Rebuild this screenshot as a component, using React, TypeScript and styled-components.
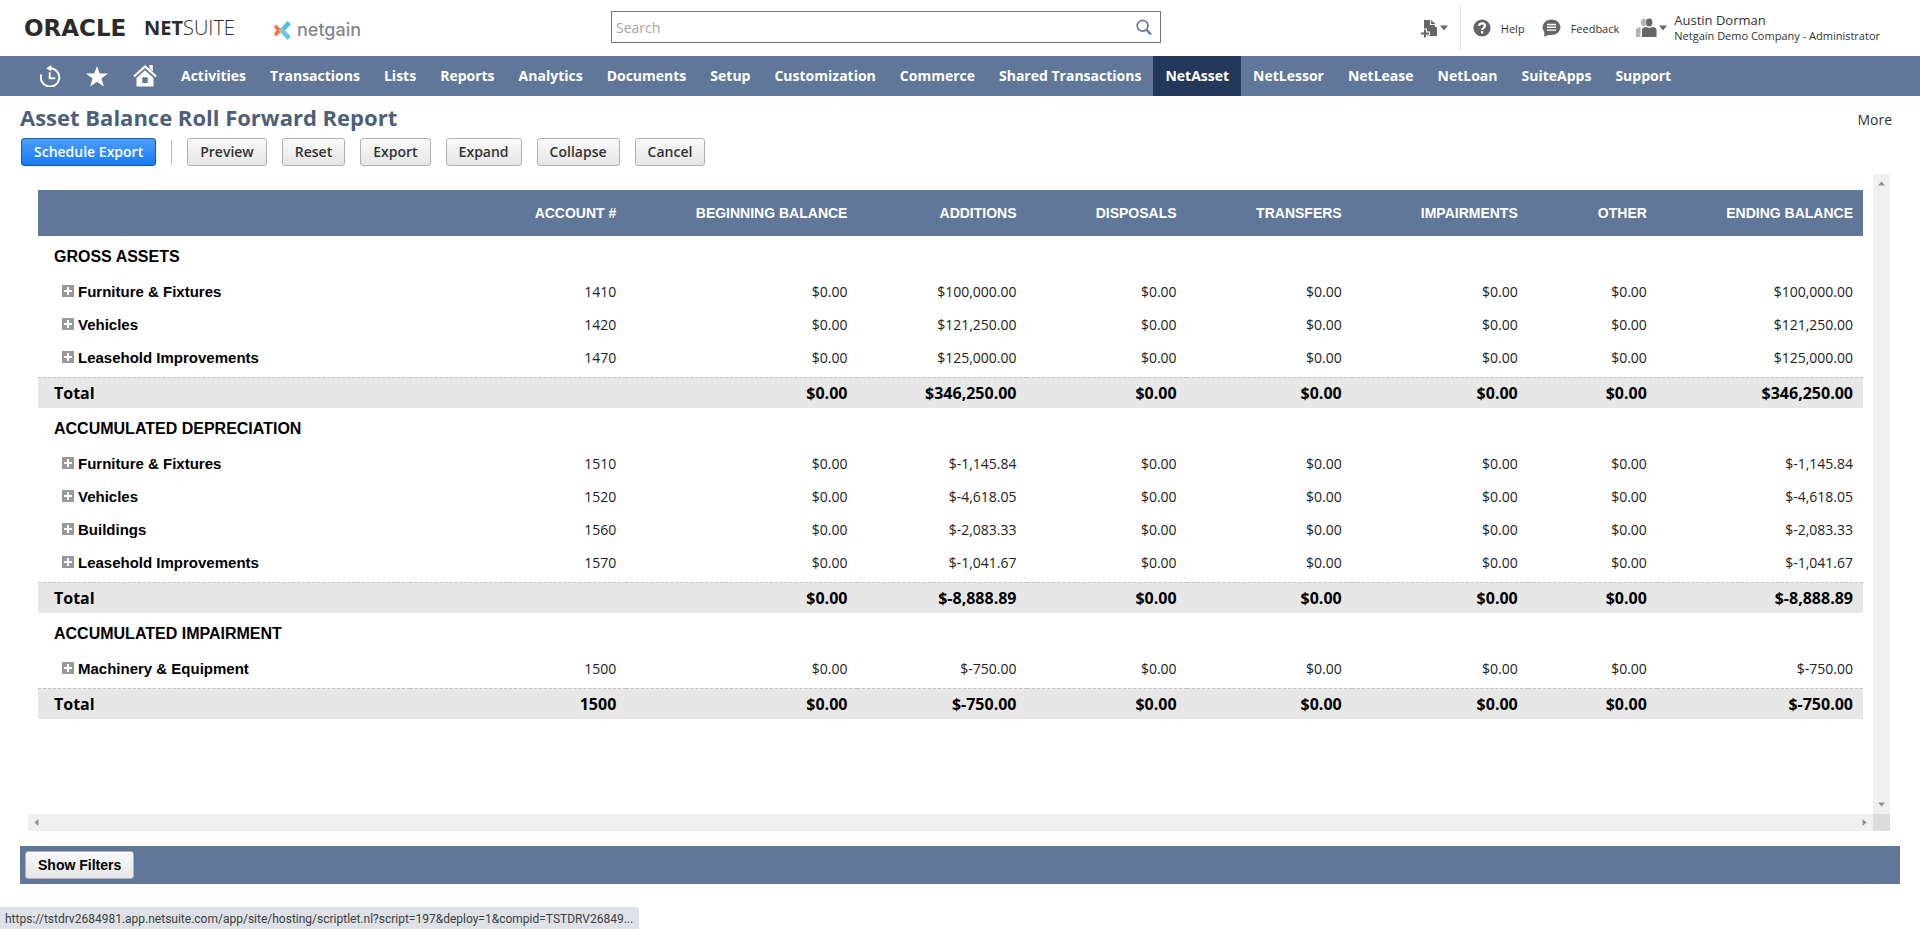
import React from "react";
import styled, { createGlobalStyle, css } from "styled-components";

const ui = `"Open Sans", "Noto Sans", sans-serif`;
const arial = `"Liberation Sans", Arial, sans-serif`;
const slate = "#607799";

const GlobalStyle = createGlobalStyle`
  *, *::before, *::after { box-sizing: border-box; }
  body { margin: 0; background: #fff; font-family: ${ui}; font-size: 14px; color: #333; }
  button, input { font: inherit; }
  a { color: inherit; text-decoration: none; }
`;

const Page = styled.div`
  display: flex;
  flex-direction: column;
`;

/* ---------- top header ---------- */
const Header = styled.header`
  display: grid;
  grid-template-columns: 611fr 550fr 759fr;
  align-items: center;
  height: 56px;
`;

const Brands = styled.div`
  display: flex;
  align-items: center;
  padding-left: 24px;
`;

const OracleLogo = styled.a`
  display: flex;
  align-items: center;
  width: 249px;
  height: 28px;
  color: #2d2a28;
  font-size: 20px;
  line-height: 28px;
`;

const Oracle = styled.span`
  width: 120px;
  font-family: "DejaVu Sans", sans-serif;
  font-size: 23px;
  font-weight: 700;
`;

const Net = styled.span`
  font-weight: 700;
`;

const Suite = styled.span`
  font-weight: 300;
`;

const NetgainLogo = styled.a`
  display: flex;
  align-items: center;
  gap: 5px;
  padding-top: 4px;
  color: #85878b;
  font-family: Inter, sans-serif;
  font-size: 18px;
  font-weight: 500;
  line-height: 22px;
`;

const SearchForm = styled.form`
  display: flex;
  align-items: center;
  height: 32px;
  margin-top: -2px;
  border: 1px solid #757575;
`;

const SearchInput = styled.input`
  flex: 1;
  min-width: 0;
  height: 30px;
  padding: 0 4px;
  border: 0;
  outline: 0;
  background: none;
  &::placeholder { color: #a6a6a6; opacity: 1; }
`;

const IconButton = styled.button`
  display: flex;
  align-items: center;
  gap: 2px;
  padding: 0;
  border: 0;
  background: none;
  color: #666;
`;

const SearchButton = styled(IconButton)`
  padding: 0 8px;
  color: ${slate};
`;

const Tools = styled.div`
  display: flex;
  align-items: center;
  justify-content: flex-end;
  padding-right: 40px;
  font-size: 11px;
`;

const ToolDivider = styled.span`
  width: 1px;
  height: 46px;
  margin: 0 12px;
  background: #e0e0e0;
`;

const ToolLink = styled.a`
  display: flex;
  align-items: center;
  gap: 10px;
  margin-right: 17px;
  svg { color: #666; }
`;

const User = styled.div`
  display: flex;
  flex-direction: column;
  margin-left: 7px;
  font-size: 11px;
  line-height: 16px;
  white-space: nowrap;
`;

const UserName = styled.span`
  font-size: 13px;
`;

/* ---------- navigation ---------- */
const Nav = styled.nav`
  display: flex;
  height: 40px;
  padding-left: 27px;
  background: ${slate};
  color: #fff;
`;

const NavLink = styled.a<{ $active?: boolean }>`
  display: flex;
  align-items: center;
  padding: 0 12px 2px;
  font-weight: 700;
  white-space: nowrap;
  ${(p) => p.$active && css`background: #24385b;`}
`;

const NavIcon = styled.a`
  display: flex;
  align-items: center;
  padding: 0 12px 0 13px;
`;

/* ---------- page title and actions ---------- */
const TitleRow = styled.div`
  display: flex;
  justify-content: space-between;
  align-items: flex-end;
  padding: 6px 28px 0 20px;
  line-height: 24px;
`;

const Title = styled.h1`
  margin: 0;
  color: #4d5f79;
  font-size: 22px;
  font-weight: 700;
  line-height: 30px;
`;

const Actions = styled.div`
  display: flex;
  align-items: center;
  gap: 15px;
  margin: 6px 0 8px 21px;
`;

const Button = styled.button<{ $primary?: boolean }>`
  height: 28px;
  padding: 0 12px;
  border: 1px solid #b2b2b2;
  border-radius: 3px;
  background: linear-gradient(#fafafa, #e5e5e5);
  color: #333;
  font-weight: 600;
  line-height: 26px;
  white-space: nowrap;
  ${(p) =>
    p.$primary &&
    css`
      border-color: #125ab2;
      background: linear-gradient(#4c9dff, #187bf2);
      color: #fff;
    `}
`;

const ActionDivider = styled.span`
  width: 1px;
  height: 25px;
  background: #bbb;
`;

/* ---------- report panel ---------- */
const Panel = styled.section`
  display: grid;
  grid-template-columns: 1fr 17px;
  grid-template-rows: auto 17px;
  margin: 0 30px 0 28px;
`;

const Sheet = styled.div`
  padding: 16px 10px 95px 10px;
`;

const Track = styled.div<{ $vertical?: boolean }>`
  display: flex;
  flex-direction: ${(p) => (p.$vertical ? "column" : "row")};
  align-items: center;
  justify-content: space-between;
  padding: ${(p) => (p.$vertical ? "6px 0" : "0 5px")};
  background: #f0f0f0;
`;

const Corner = styled.div`
  background: #dcdcdc;
`;

const Table = styled.table`
  width: 100%;
  border-collapse: separate;
  border-spacing: 0;
  table-layout: fixed;
  color: #000;
`;

const Th = styled.th`
  height: 46px;
  padding: 0 10px 0 0;
  background: ${slate};
  color: #fff;
  font-family: ${arial};
  font-size: 14px;
  font-weight: 700;
  text-align: right;
`;

const SectionCell = styled.th`
  height: 42px;
  padding: 0 0 0 16px;
  font-family: ${arial};
  font-size: 16px;
  font-weight: 700;
  text-align: left;
`;

const LabelCell = styled.th`
  height: 33px;
  padding: 0 0 6px 24px;
  font-family: ${arial};
  font-size: 15px;
  font-weight: 700;
  text-align: left;
`;

const Label = styled.span`
  display: flex;
  align-items: center;
  gap: 4px;
`;

const Toggle = styled.button`
  display: block;
  width: 12px;
  height: 12px;
  margin-bottom: 2px;
  padding: 0;
  border: 0;
  background: #999;
  svg { display: block; }
`;

const Td = styled.td`
  padding: 0 10px 5px 0;
  color: #222;
  font-size: 14px;
  line-height: 20px;
  text-align: right;
`;

const totalStyle = css`
  height: 31px;
  border-top: 1px dashed #c4c4c4;
  background: #e7e7e7;
  color: #000;
  font-size: 16px;
  font-weight: 700;
  line-height: 22px;
`;

const TotalLabel = styled.th`
  ${totalStyle}
  padding: 0 0 0 16px;
  text-align: left;
`;

const TotalCell = styled.td`
  ${totalStyle}
  padding: 0 10px 0 0;
  text-align: right;
`;

/* ---------- footer ---------- */
const FilterBar = styled.div`
  display: flex;
  align-items: center;
  height: 38px;
  margin: 15px 20px 45px;
  padding-left: 5px;
  background: ${slate};
`;

const FilterButton = styled(Button)`
  color: #000;
  font-family: ${arial};
  font-weight: 700;
`;

const StatusUrl = styled.div`
  position: fixed;
  left: 0;
  bottom: 0;
  height: 22px;
  padding: 0 6px 0 5px;
  border-radius: 0 4px 0 0;
  background: #dee1e6;
  color: #3c4043;
  font-family: Roboto, sans-serif;
  font-size: 12px;
  line-height: 24px;
  white-space: nowrap;
`;

/* ---------- icons ---------- */
const Caret = () => (
  <svg width="8" height="6" viewBox="0 0 8 6" fill="currentColor"><path d="M0 .5h8L4 5.500z" /></svg>
);

const ScrollArrow = ({ turn }: { turn: number }) => (
  <svg width="7" height="7" viewBox="0 0 7 7" fill="#8f8f8f">
    <path d="M3.500 1.500 7 5.500H0z" transform={`rotate(${turn} 3.5 3.5)`} />
  </svg>
);

const NetgainMark = () => (
  <svg width="19" height="21" viewBox="0 0 19 21">
    <path d="M1 7 3 4.500 9 10.500 3 16.500 1 14 3.500 10.500z" fill="#f4743b" />
    <path d="M14.500 1 18 4.200 12.200 10.400 8.700 13.600 5.600 10.400z" fill="#4cc3e6" />
    <path d="M5.600 10.400 9 7.200 18 16.800 14.500 20z" fill="#62cbe9" />
    <path d="m9 7.200 3.200 3.200L9 13.600l-3.400-3.200z" fill="#a9b9bd" />
  </svg>
);

const SearchIcon = () => (
  <svg width="16" height="17" viewBox="0 0 16 17" fill="none" stroke="currentColor">
    <circle cx="6.600" cy="6.800" r="5.400" strokeWidth="1.700" />
    <path d="m10.600 10.900 4.400 4.600" strokeWidth="2.200" />
  </svg>
);

const CreateIcon = () => (
  <svg width="17" height="19" viewBox="0 0 17 19" fill="currentColor">
    <path d="M3 1h6v5h5v2h2v9H6v-6H3z" />
    <path d="m10 1 4.500 4H10z" />
    <path d="M4 9.500V19M0 14.500h9" stroke="#fff" strokeWidth="4" />
    <path d="M4 10.500v8M0 14.500h8" stroke="currentColor" strokeWidth="2" />
  </svg>
);

const HelpIcon = () => (
  <svg width="18" height="18" viewBox="0 0 18 18">
    <circle cx="9" cy="9" r="8.600" fill="currentColor" />
    <path d="M6.200 7c0-3.700 5.800-3.400 5.800-.2C12 8.800 9.100 8.800 9.100 11" fill="none" stroke="#fff" strokeWidth="2.200" />
    <rect x="8" y="12.200" width="2.300" height="2.200" fill="#fff" />
  </svg>
);

const FeedbackIcon = () => (
  <svg width="19" height="18" viewBox="0 0 19 18">
    <ellipse cx="9.500" cy="8.300" rx="9" ry="7.800" fill="currentColor" />
    <path d="M2.300 12v5.800l6-2.500z" fill="currentColor" />
    <path d="M5 5.500h9M5 8.300h9M5 11.100h9" stroke="#fff" strokeWidth="1.400" />
  </svg>
);

const PeopleIcon = () => (
  <svg width="21" height="20" viewBox="0 0 21 20">
    <ellipse cx="8" cy="4.500" rx="3.200" ry="3.800" fill="#b5b5b5" />
    <path d="M0 19v-7.500Q.5 9 4.500 9V19z" fill="#b5b5b5" />
    <ellipse cx="13.200" cy="4.500" rx="3.500" ry="4.200" fill="currentColor" stroke="#fff" strokeWidth=".6" />
    <path d="M6 19v-7q0-2.500 3.500-3l3.700 1 3.700-1q3.600.5 3.600 3v7z" fill="currentColor" />
  </svg>
);

const HistoryIcon = () => (
  <svg width="21" height="22" viewBox="0 0 21 22" fill="none" stroke="currentColor">
    <path d="M1.300 9.500A9.200 9.200 0 1 0 10.500 3.200" strokeWidth="2" />
    <path d="M11.300 0v6.400L6.300 3.200z" fill="currentColor" stroke="none" />
    <path d="M9.700 7.300v6h5.500" strokeWidth="2" />
  </svg>
);

const StarIcon = () => (
  <svg width="22" height="21" viewBox="0 0 22 21" fill="currentColor">
    <path d="m11 0 2.700 7.600H22l-6.600 4.900 2.500 8.100L11 15.700l-6.900 4.900 2.500-8.100L0 7.600h8.300z" />
  </svg>
);

const HomeIcon = () => (
  <svg width="24" height="22" viewBox="0 0 24 22">
    <path d="m1 11.500 11-10 11 10" fill="none" stroke="currentColor" strokeWidth="2.200" />
    <path d="M16.500 0h3.300v6.500l-3.300-3z" fill="currentColor" />
    <path d="M12 5.300 20.500 13v8.500h-17V13z" fill="currentColor" />
    <rect x="9.300" y="12.300" width="5.400" height="5.700" fill={slate} />
  </svg>
);

/* ---------- data ---------- */
const menu = [
  "Activities", "Transactions", "Lists", "Reports", "Analytics", "Documents", "Setup",
  "Customization", "Commerce", "Shared Transactions", "NetAsset", "NetLessor", "NetLease",
  "NetLoan", "SuiteApps", "Support",
];

const actions = ["Preview", "Reset", "Export", "Expand", "Collapse", "Cancel"];

const columnWidths = [372, 216, 231, 169, 160, 165, 176, 129, 206];
const columns = [
  "ACCOUNT #", "BEGINNING BALANCE", "ADDITIONS", "DISPOSALS", "TRANSFERS", "IMPAIRMENTS",
  "OTHER", "ENDING BALANCE",
];

interface Section {
  name: string;
  rows: [label: string, account: string, amount: string][];
  total: [account: string, amount: string];
}

const sections: Section[] = [
  {
    name: "GROSS ASSETS",
    rows: [
      ["Furniture & Fixtures", "1410", "$100,000.00"],
      ["Vehicles", "1420", "$121,250.00"],
      ["Leasehold Improvements", "1470", "$125,000.00"],
    ],
    total: ["", "$346,250.00"],
  },
  {
    name: "ACCUMULATED DEPRECIATION",
    rows: [
      ["Furniture & Fixtures", "1510", "$-1,145.84"],
      ["Vehicles", "1520", "$-4,618.05"],
      ["Buildings", "1560", "$-2,083.33"],
      ["Leasehold Improvements", "1570", "$-1,041.67"],
    ],
    total: ["", "$-8,888.89"],
  },
  {
    name: "ACCUMULATED IMPAIRMENT",
    rows: [["Machinery & Equipment", "1500", "$-750.00"]],
    total: ["1500", "$-750.00"],
  },
];

const zero = "$0.00";
const cells = (account: string, amount: string) => [account, zero, amount, zero, zero, zero, zero, amount];

const ReportTable = () => (
  <Table>
    <colgroup>
      {columnWidths.map((w, i) => <col key={i} width={w} />)}
    </colgroup>
    <thead>
      <tr>
        <Th aria-label="Asset type" />
        {columns.map((c) => <Th key={c} scope="col">{c}</Th>)}
      </tr>
    </thead>
    {sections.map((s) => (
      <tbody key={s.name}>
        <tr><SectionCell colSpan={9} scope="rowgroup">{s.name}</SectionCell></tr>
        {s.rows.map(([label, account, amount]) => (
          <tr key={label}>
            <LabelCell scope="row">
              <Label>
                <Toggle type="button" aria-label={`Expand ${label}`}>
                  <svg width="12" height="12" viewBox="0 0 12 12"><path d="M6 2v8M2 6h8" stroke="#fff" strokeWidth="2" /></svg>
                </Toggle>
                {label}
              </Label>
            </LabelCell>
            {cells(account, amount).map((v, i) => <Td key={i}>{v}</Td>)}
          </tr>
        ))}
        <tr>
          <TotalLabel scope="row">Total</TotalLabel>
          {cells(...s.total).map((v, i) => <TotalCell key={i}>{v}</TotalCell>)}
        </tr>
      </tbody>
    ))}
  </Table>
);

export default function App() {
  return (
    <Page>
      <GlobalStyle />
      <Header>
        <Brands>
          <OracleLogo href="#"><Oracle>ORACLE</Oracle><Net>NET</Net><Suite>SUITE</Suite></OracleLogo>
          <NetgainLogo href="#"><NetgainMark />netgain</NetgainLogo>
        </Brands>
        <SearchForm role="search">
          <SearchInput type="text" placeholder="Search" aria-label="Search" />
          <SearchButton type="button" aria-label="Run search"><SearchIcon /></SearchButton>
        </SearchForm>
        <Tools>
          <IconButton type="button" aria-label="Create new"><CreateIcon /><Caret /></IconButton>
          <ToolDivider />
          <ToolLink href="#"><HelpIcon />Help</ToolLink>
          <ToolLink href="#"><FeedbackIcon />Feedback</ToolLink>
          <IconButton type="button" aria-label="Change role"><PeopleIcon /><Caret /></IconButton>
          <User><UserName>Austin Dorman</UserName><span>Netgain Demo Company - Administrator</span></User>
        </Tools>
      </Header>
      <Nav>
        <NavIcon href="#" aria-label="Recent records"><HistoryIcon /></NavIcon>
        <NavIcon href="#" aria-label="Shortcuts"><StarIcon /></NavIcon>
        <NavIcon href="#" aria-label="Home"><HomeIcon /></NavIcon>
        {menu.map((m) => <NavLink key={m} href="#" $active={m === "NetAsset"}>{m}</NavLink>)}
      </Nav>
      <main>
        <TitleRow><Title>Asset Balance Roll Forward Report</Title><a href="#">More</a></TitleRow>
        <Actions>
          <Button type="button" $primary>Schedule Export</Button>
          <ActionDivider />
          {actions.map((a) => <Button key={a} type="button">{a}</Button>)}
        </Actions>
        <Panel>
          <Sheet><ReportTable /></Sheet>
          <Track $vertical><ScrollArrow turn={0} /><ScrollArrow turn={180} /></Track>
          <Track><ScrollArrow turn={-90} /><ScrollArrow turn={90} /></Track>
          <Corner />
        </Panel>
        <FilterBar><FilterButton type="button">Show Filters</FilterButton></FilterBar>
      </main>
      <StatusUrl>https://tstdrv2684981.app.netsuite.com/app/site/hosting/scriptlet.nl?script=197&amp;deploy=1&amp;compid=TSTDRV26849...</StatusUrl>
    </Page>
  );
}
